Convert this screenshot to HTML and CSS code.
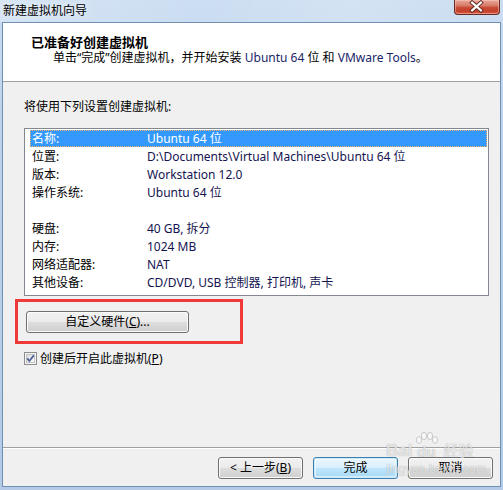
FILE: index.html
```html
<!DOCTYPE html>
<html lang="zh-CN">
<head>
<meta charset="utf-8">
<title>新建虚拟机向导</title>
<link rel="stylesheet" href="styles.css">
</head>
<body>
<div class="window">
  <div class="titlebar">
    <span class="title">新建虚拟机向导</span>
    <div class="close">
      <svg width="46" height="15" viewBox="0 0 46 15">
        <path d="M18.5 3.5 L27.5 11.5 M27.5 3.5 L18.5 11.5" stroke="#5a2218" stroke-width="4" stroke-linecap="square"/>
        <path d="M18.5 3.5 L27.5 11.5 M27.5 3.5 L18.5 11.5" stroke="#ffffff" stroke-width="2.2" stroke-linecap="square"/>
      </svg>
    </div>
  </div>
  <div class="client">
    <div class="header">
      <div class="h-title">已准备好创建虚拟机</div>
      <div class="h-sub">单击“完成”创建虚拟机，并开始安装 <span class="lat">Ubuntu 64</span> 位 和 <span class="lat">VMware Tools</span>。</div>
    </div>
    <div class="body">
      <div class="intro">将使用下列设置创建虚拟机:</div>
      <div class="list">
        <div class="row sel"><span class="k">名称:</span><span class="v">Ubuntu 64 位</span></div>
        <div class="row"><span class="k">位置:</span><span class="v">D:\Documents\Virtual Machines\Ubuntu 64 位</span></div>
        <div class="row"><span class="k">版本:</span><span class="v">Workstation 12.0</span></div>
        <div class="row"><span class="k">操作系统:</span><span class="v">Ubuntu 64 位</span></div>
        <div class="row"></div>
        <div class="row"><span class="k">硬盘:</span><span class="v">40 GB, 拆分</span></div>
        <div class="row"><span class="k">内存:</span><span class="v">1024 MB</span></div>
        <div class="row"><span class="k">网络适配器:</span><span class="v">NAT</span></div>
        <div class="row"><span class="k">其他设备:</span><span class="v">CD/DVD, USB 控制器, 打印机, 声卡</span></div>
      </div>
      <div class="annot">
        <div class="btn custom">自定义硬件(<u>C</u>)...</div>
      </div>
      <div class="check">
        <svg class="box" width="13" height="13" viewBox="0 0 13 13">
          <defs>
            <linearGradient id="cb" x1="0" y1="0" x2="1" y2="1">
              <stop offset="0" stop-color="#dcdcdc"/>
              <stop offset="1" stop-color="#fbfbfb"/>
            </linearGradient>
          </defs>
          <rect x="0.5" y="0.5" width="12" height="12" fill="#f4f4f4" stroke="#8e8f8f"/>
          <rect x="2.5" y="2.5" width="8" height="8" fill="url(#cb)" stroke="#c4c4c4"/>
          <path d="M3.2 6.4 L5.4 9 L9.8 3.4" fill="none" stroke="#4a5f95" stroke-width="1.7"/>
        </svg>
        <span>创建后开启此虚拟机(<u>P</u>)</span>
      </div>
      <div class="spacer"></div>
    </div>
    <div class="footer">
      <div class="btn">&lt; 上一步(<u>B</u>)</div>
      <div class="btn default">完成</div>
      <div class="btn">取消</div>
    </div>
  </div>
  <div class="watermark">
    <div class="wm-top">
      <span class="wm-bai">Bai</span>
      <span class="wm-paw">
        <svg width="26" height="16" viewBox="0 0 26 16">
          <ellipse cx="6" cy="9" rx="2.6" ry="3.4" fill="rgba(255,255,255,0.55)" stroke="rgba(120,120,120,0.35)"/>
          <ellipse cx="11" cy="5" rx="2.6" ry="3.6" fill="rgba(255,255,255,0.55)" stroke="rgba(120,120,120,0.35)"/>
          <ellipse cx="17" cy="5" rx="2.6" ry="3.6" fill="rgba(255,255,255,0.55)" stroke="rgba(120,120,120,0.35)"/>
          <ellipse cx="22" cy="9" rx="2.6" ry="3.4" fill="rgba(255,255,255,0.55)" stroke="rgba(120,120,120,0.35)"/>
        </svg>
        <span class="wm-du">du</span>
      </span>
      <span class="wm-jy">经验</span>
    </div>
    <div class="wm-url">jingyan.baidu.com</div>
  </div>
</div>
</body>
</html>
```
FILE: styles.css
```css
* { box-sizing: border-box; }
html, body {
  margin: 0;
  padding: 0;
  background: #b8cfe8;
}
body {
  font-family: "Noto Sans", "Noto Sans CJK SC", sans-serif;
  font-size: 12px;
  color: #000;
}
.window {
  position: relative;
  width: 503px;
  height: 490px;
  display: flex;
  flex-direction: column;
  background: linear-gradient(180deg, #c9dcf1 0%, #bcd2ea 30%, #b3cbe6 100%);
  overflow: hidden;
}
.titlebar {
  flex: none;
  height: 22px;
  display: flex;
  justify-content: space-between;
  align-items: flex-start;
  padding: 0 3px 0 3px;
  background: linear-gradient(90deg, rgba(255,255,255,0.25) 0%, rgba(255,255,255,0.05) 40%, rgba(255,255,255,0.2) 70%, rgba(255,255,255,0.05) 100%);
}
.title {
  line-height: 22px;
  color: #000;
  text-shadow: 0 0 6px rgba(255,255,255,0.9);
}
.close {
  width: 46px;
  height: 15px;
  border: 1px solid #6b2a20;
  border-top: none;
  border-radius: 0 0 4px 4px;
  background: linear-gradient(180deg, #e9a99b 0%, #d77a68 40%, #c84a36 55%, #c5402c 80%, #d8624c 100%);
  box-shadow: inset 0 0 0 1px rgba(255,210,200,0.45);
  display: flex;
  overflow: hidden;
}
.close svg { display: block; margin: -1px 0 0 -1px; }
.client {
  flex: 1;
  margin: 0 2px 3px 2px;
  border: 1px solid #6f8fb4;
  background: #f0f0f0;
  display: flex;
  flex-direction: column;
}
.header {
  flex: none;
  height: 59px;
  background: #fff;
  border-bottom: 1px solid #a0a0a0;
  padding: 11px 0 0 28px;
}
.h-title {
  font-weight: bold;
  font-size: 13px;
  line-height: 16px;
}
.h-sub {
  line-height: 16px;
  margin-left: 22px;
  white-space: nowrap;
}
.lat { color: #1a2468; }
.body {
  flex: 1;
  display: flex;
  flex-direction: column;
  padding-top: 17px;
}
.intro {
  line-height: 16px;
  margin-left: 21px;
}
.list {
  margin: 13px 0 0 21px;
  width: 465px;
  height: 168px;
  border: 1px solid #828790;
  background: #fff;
  padding: 1px 1px 0 5px;
}
.row {
  height: 18px;
  line-height: 18px;
  display: flex;
  padding-left: 2px;
  white-space: nowrap;
}
.row.sel {
  height: 17px;
  line-height: 17px;
  margin-bottom: 1px;
  background: #3399ff;
  color: #fff;
  outline: 1px dotted #ffb060;
  outline-offset: -1px;
}
.k { width: 115px; flex: none; }
.v { color: #141450; }
.row.sel .v { color: #fff; }
.annot {
  margin: 3px 0 0 12px;
  width: 228px;
  height: 45px;
  border: 3px solid #f03a3a;
  padding: 9px 0 0 8px;
}
.btn {
  height: 22px;
  width: 85px;
  border: 1px solid #707070;
  border-radius: 3px;
  background: linear-gradient(180deg, #f2f2f2 0%, #ebebeb 48%, #dddddd 52%, #cfcfcf 100%);
  box-shadow: inset 0 0 0 1px #fbfbfb;
  display: flex;
  align-items: center;
  justify-content: center;
  line-height: 20px;
  white-space: nowrap;
}
.btn.custom { width: 163px; }
.btn.default {
  border-color: #3c7fb1;
  background: linear-gradient(180deg, #eaf6fd 0%, #d9f0fc 48%, #bee6fd 52%, #a7d9f5 100%);
  box-shadow: inset 0 0 0 1px #cdeafa, inset 0 0 0 2px rgba(255,255,255,0.5);
}
u { text-decoration: underline; text-underline-offset: 1px; }
.check {
  margin: 8px 0 0 21px;
  height: 13px;
  display: flex;
  align-items: center;
  gap: 3px;
}
.check span { line-height: 13px; }
.box { display: block; flex: none; }
.spacer { flex: 1; }
.footer {
  flex: none;
  height: 39px;
  border-top: 1px solid #a0a0a0;
  box-shadow: inset 0 1px 0 #ffffff;
  display: flex;
  justify-content: flex-end;
  gap: 10px;
  padding: 9px 7px 0 0;
}
.watermark {
  position: absolute;
  left: 386px;
  top: 428px;
  width: 92px;
  pointer-events: none;
  color: rgba(255,255,255,0.7);
  text-shadow: 0 0 1px rgba(90,90,90,0.55);
  font-family: "Liberation Sans", "Noto Sans CJK SC", sans-serif;
}
.wm-top {
  display: flex;
  align-items: flex-end;
  height: 32px;
}
.wm-bai { font-size: 17px; font-weight: bold; line-height: 18px; }
.wm-paw {
  display: flex;
  flex-direction: column;
  align-items: center;
  width: 28px;
}
.wm-paw svg { display: block; }
.wm-du { font-size: 15px; font-weight: bold; line-height: 16px; margin-top: -3px; }
.wm-jy { font-size: 15px; line-height: 18px; margin-left: 3px; }
.wm-url { font-size: 12px; line-height: 14px; margin-top: 2px; letter-spacing: 0.2px; }
```
